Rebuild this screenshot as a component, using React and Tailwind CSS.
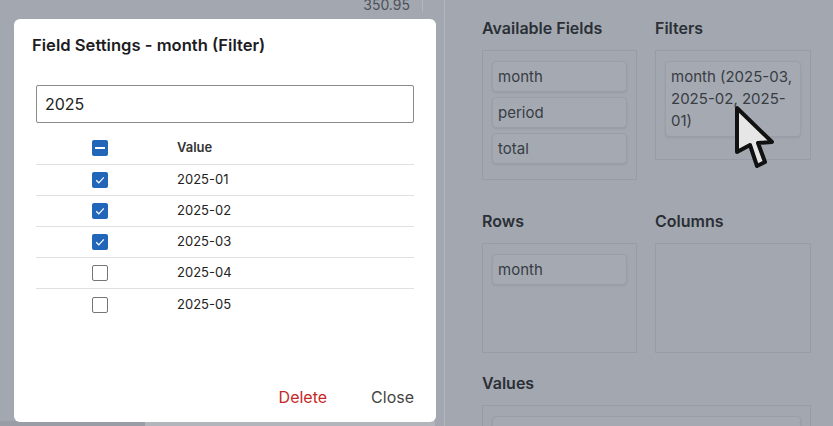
import React from "react";

const font = { fontFamily: "Inter, 'Noto Sans', sans-serif" };

const Check = ({ state }) => {
  if (state === "off") {
    return <span className="block w-4 h-4 rounded-[2px] border border-[#767676] bg-white" />;
  }
  return (
    <span className="flex w-4 h-4 items-center justify-center rounded-[2px] bg-[#2166b9]">
      {state === "on" ? (
        <svg width="12" height="12" viewBox="0 0 12 12">
          <path d="M2.2 6.3 L4.8 8.8 L9.8 3.4" fill="none" stroke="white" strokeWidth="1.2" />
        </svg>
      ) : (
        <span className="block w-[10px] h-[1.5px] bg-white" />
      )}
    </span>
  );
};

const rows = [
  { v: "2025-01", s: "on" },
  { v: "2025-02", s: "on" },
  { v: "2025-03", s: "on" },
  { v: "2025-04", s: "off" },
  { v: "2025-05", s: "off" },
];

const Item = ({ children, className = "" }) => (
  <div
    className={`mb-[5px] rounded-[4px] border border-[#9a9fa7] bg-[#a5aab2] px-[5px] py-[4px] text-[15px] leading-[21px] text-[#383c44] shadow-[0_1px_2px_rgba(0,0,0,0.08)] ${className}`}
  >
    {children}
  </div>
);

const Zone = ({ title, children, className = "" }) => (
  <div className={className}>
    <h3 className="text-[16px] leading-6 font-semibold text-[#2b2f36] mb-[10px]">{title}</h3>
    <div className="min-h-[110px] border border-[#989da5] pt-[10px] px-[9px] pb-[9px]">{children}</div>
  </div>
);

export default function App() {
  return (
    <div className="relative w-[833px] h-[426px] overflow-hidden bg-[#a3a8b0]" style={font}>
      <div className="flex h-full">
        {/* page behind dialog */}
        <div className="w-[445px] h-full border-r border-[#b2b6bc] flex flex-col">
          <div className="flex h-[12px]">
            <div className="w-[422px] pr-[12px] -mt-[4px] text-right text-[14px] leading-[18px] text-[#4d5159]">350.95</div>
            <div className="w-px bg-[#b3b7bd]" />
          </div>
          <div className="flex-1" />
          <div className="flex h-[5px]">
            <div className="w-[145px] bg-[#999ea6]" />
            <div className="w-[290px] bg-[#b2b6bc]" />
          </div>
        </div>

        {/* pivot field panel */}
        <div className="flex-1 pl-[37px] pt-[16px]">
          <div className="grid grid-cols-[155px_156px] gap-x-[18px] gap-y-[29px] items-start">
            <Zone title="Available Fields">
              <Item>month</Item>
              <Item>period</Item>
              <Item>total</Item>
              <div className="h-px" />
            </Zone>
            <Zone title="Filters">
              <Item className="leading-[22px]">month (2025-03, 2025-02, 2025-01)</Item>
            </Zone>
            <Zone title="Rows">
              <Item>month</Item>
            </Zone>
            <Zone title="Columns" />
            <Zone title="Values" className="col-span-2 -mt-[11px]">
              <Item>&nbsp;</Item>
            </Zone>
          </div>
        </div>
      </div>

      {/* dialog */}
      <div className="absolute left-[14px] top-[19px] w-[422px] h-[403px] bg-white rounded-md flex flex-col px-[22px]">
        <h2 className="pt-[14px] -ml-[4px] text-[16.6px] leading-6 font-semibold text-[#1d1d1f]">
          Field Settings - month (Filter)
        </h2>
        <div className="mt-[28px] h-[38px] border border-[#8a8a8a] rounded-[2px] flex items-center px-[8px] text-[16px] text-[#222]">
          2025
        </div>
        <div className="mt-[9px]">
          <div className="flex items-center h-[33px] border-b border-[#e0e0e0]">
            <div className="w-[128px] flex justify-center"><Check state="mixed" /></div>
            <div className="pl-[13px] text-[13px] font-semibold text-[#333]">Value</div>
          </div>
          {rows.map((r, i) => (
            <div
              key={r.v}
              className={`flex items-center h-[31px] ${i < rows.length - 1 ? "border-b border-[#e0e0e0]" : ""}`}
            >
              <div className="w-[128px] flex justify-center"><Check state={r.s} /></div>
              <div className="pl-[13px] text-[13px] text-[#222]">{r.v}</div>
            </div>
          ))}
        </div>
        <div className="flex-1" />
        <div className="flex justify-end gap-[44px] pb-[15px] text-[16px] leading-[20px]">
          <button className="text-[#c62828]">Delete</button>
          <button className="text-[#444]">Close</button>
        </div>
      </div>

      {/* mouse pointer */}
      <svg className="absolute left-[732px] top-[103px]" width="46" height="68" viewBox="0 0 46 68">
        <path
          d="M5 5 L5 49 L18 42 L25 63 L33 59 L26 40 L40 39 Z"
          fill="#e6e6e6"
          stroke="#111"
          strokeWidth="4"
          strokeLinejoin="round"
        />
      </svg>
    </div>
  );
}
